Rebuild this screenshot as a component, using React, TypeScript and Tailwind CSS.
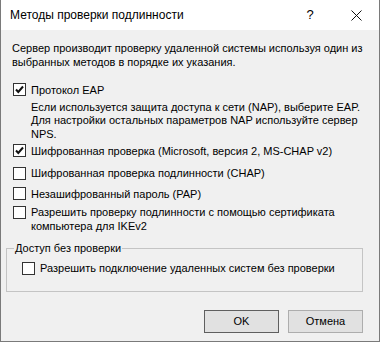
import * as React from "react";

const font = { fontFamily: "'Liberation Sans', Arial, sans-serif" };

function CheckBox({ checked }: { checked?: boolean }) {
  return (
    <span className="flex w-[13px] h-[13px] shrink-0 border border-[#333333] bg-white items-center justify-center">
      {checked && (
        <svg width="11" height="11" viewBox="0 0 11 11">
          <polyline points="2,5.5 4.3,8 9,2.5" fill="none" stroke="#111" strokeWidth="2" />
        </svg>
      )}
    </span>
  );
}

function Option({ checked, children, className }: { checked?: boolean; children: React.ReactNode; className?: string }) {
  return (
    <div className={`flex items-start gap-[5px] pl-[12px] ${className ?? ""}`}>
      <CheckBox checked={checked} />
      <div className="leading-[14px] -mt-[0.5px]">{children}</div>
    </div>
  );
}

export default function App() {
  return (
    <div className="w-[380px] h-[342px] flex flex-col bg-[#f0f0f0] border-x border-b border-[#7a7a7a] text-black text-[11px]" style={font}>
      <div className="h-[30px] bg-white flex items-center shrink-0">
        <div className="flex-1 pl-[9px] text-[12px]">Методы проверки подлинности</div>
        <div className="w-[46px] h-full flex items-center justify-center text-[13px]">?</div>
        <div className="w-[46px] h-full flex items-center justify-center">
          <svg width="11" height="11" viewBox="0 0 11 11">
            <path d="M0.5 0.5 L10.5 10.5 M10.5 0.5 L0.5 10.5" stroke="#111" strokeWidth="1" />
          </svg>
        </div>
      </div>

      <div className="flex flex-col pt-[11px]">
        <p className="pl-[11px] pr-[10px] leading-[14px]">
          Сервер производит проверку удаленной системы используя один из выбранных методов в порядке их указания.
        </p>

        <Option checked className="mt-[14px]">Протокол EAP</Option>
        <p className="pl-[30px] pr-[10px] mt-[4px] leading-[13.5px]">
          Если используется защита доступа к сети (NAP), выберите EAP. Для настройки остальных параметров NAP используйте сервер NPS.
        </p>

        <Option checked className="mt-[3px]">Шифрованная проверка (Microsoft, версия 2, MS-CHAP v2)</Option>
        <Option className="mt-[9px]">Шифрованная проверка подлинности (CHAP)</Option>
        <Option className="mt-[7px]">Незашифрованный пароль (PAP)</Option>
        <Option className="mt-[5px]">
          Разрешить проверку подлинности с помощью сертификата
          <br />
          компьютера для IKEv2
        </Option>

        <fieldset className="ml-[5px] w-[357px] mt-[9px] border border-[#c4c4c4] pl-[8px] pb-[16px]">
          <legend className="px-[1px] ml-[-1px] leading-[13px]">Доступ без проверки</legend>
          <div className="flex items-center gap-[5px] ml-[7px] mt-[7px]">
            <CheckBox />
            <span className="leading-[13px]">Разрешить подключение удаленных систем без проверки</span>
          </div>
        </fieldset>

        <div className="flex justify-end gap-[9px] pr-[16px] mt-[18px]">
          <button className="w-[75px] h-[23px] bg-[#e1e1e1] border border-[#5f5f5f] text-[11px]">OK</button>
          <button className="w-[75px] h-[23px] bg-[#e1e1e1] border border-[#adadad] text-[11px]">Отмена</button>
        </div>
      </div>
    </div>
  );
}
